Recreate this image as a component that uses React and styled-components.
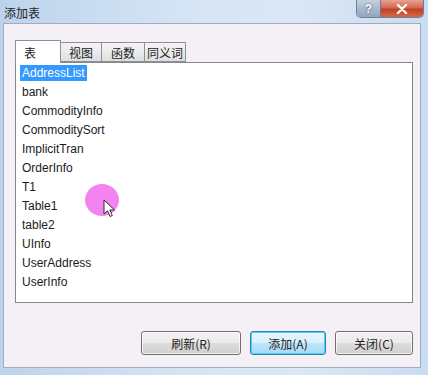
import React from 'react'
import styled, { createGlobalStyle } from 'styled-components'

const tables = [
  'AddressList',
  'bank',
  'CommodityInfo',
  'CommoditySort',
  'ImplicitTran',
  'OrderInfo',
  'T1',
  'Table1',
  'table2',
  'UInfo',
  'UserAddress',
  'UserInfo',
]

const tabs = [
  { label: '表', width: 46 },
  { label: '视图', width: 42 },
  { label: '函数', width: 44 },
  { label: '同义词', width: 42 },
]

const App = () => {
  return (
    <Window>
      <GlobalStyle />
      <TitleBar>
        <Title>添加表</Title>
        <Caption>
          <HelpBtn>?</HelpBtn>
          <CloseBtn>
            <svg width="12" height="10" viewBox="0 0 12 10">
              <path d="M2 1 L10 9 M10 1 L2 9" stroke="#fff" strokeWidth="2.4" strokeLinecap="round" />
            </svg>
          </CloseBtn>
        </Caption>
      </TitleBar>

      <Client>
        <TabRow>
          {tabs.map((t, i) => (
            <Tab key={t.label} $w={t.width} $active={i === 0}>{t.label}</Tab>
          ))}
        </TabRow>
        <ListBox>
          {tables.map((name, i) => (
            <Item key={name}>
              <Label $selected={i === 0}>{name}</Label>
            </Item>
          ))}
        </ListBox>
        <ButtonRow>
          <Button $w={100}>刷新(R)</Button>
          <Button $w={76} $default>添加(A)</Button>
          <Button $w={78}>关闭(C)</Button>
        </ButtonRow>
      </Client>

      <ClickDot />
      <Pointer width="14" height="20" viewBox="0 0 14 20">
        <path
          d="M1 1 L1 15 L4.5 11.8 L7 17.5 L9.3 16.5 L6.8 11 L11.5 11 Z"
          fill="#fff"
          stroke="#2a2a2a"
          strokeWidth="1"
          strokeLinejoin="round"
        />
      </Pointer>
    </Window>
  )
}

export default App

const GlobalStyle = createGlobalStyle`
  html, body {
    margin: 0;
    padding: 0;
    background: #cfdff1;
  }
  * { box-sizing: border-box; }
`

const Window = styled.div`
  position: relative;
  width: 428px;
  height: 375px;
  overflow: hidden;
  display: flex;
  flex-direction: column;
  padding: 0 7px 7px 3px;
  background: linear-gradient(to right, #bdd3ec 0%, #d6e5f5 45%, #dbe7f5 70%, #c9dcf1 100%);
  font-family: "Liberation Sans", "Noto Sans CJK SC", sans-serif;
  font-size: 12px;
  color: #1b1b1b;
`

const TitleBar = styled.div`
  height: 23px;
  display: flex;
  align-items: flex-start;
  justify-content: space-between;
`

const Title = styled.div`
  padding: 4px 0 0 1px;
  font-family: "Noto Sans CJK SC", sans-serif;
  font-size: 12px;
  color: #1e1e1e;
`

const Caption = styled.div`
  display: flex;
  margin-right: -3px;
  border: 1px solid #6d7f98;
  border-top: none;
  border-radius: 0 0 5px 5px;
  overflow: hidden;
  height: 18px;
`

const HelpBtn = styled.div`
  width: 24px;
  display: flex;
  align-items: center;
  justify-content: center;
  background: linear-gradient(#c5d0de, #a9b8cb 50%, #94a7bf);
  border-right: 1px solid #6d7f98;
  color: #fff;
  font-weight: bold;
  font-size: 12px;
  text-shadow: 0 0 2px #33475f;
`

const CloseBtn = styled.div`
  width: 42px;
  display: flex;
  align-items: center;
  justify-content: center;
  background: linear-gradient(#e8a393, #d5694f 45%, #c2411f 55%, #d5694a);
`

const Client = styled.div`
  flex: 1;
  display: flex;
  flex-direction: column;
  padding: 16px 7px 0 11px;
  background: #f4f0f6;
  border: 1px solid #9eadc2;
`

const TabRow = styled.div`
  display: flex;
  align-items: flex-end;
  height: 22px;
  position: relative;
  z-index: 1;
`

const Tab = styled.div`
  display: flex;
  align-items: center;
  justify-content: ${p => (p.$active ? 'flex-start' : 'center')};
  width: ${p => p.$w}px;
  padding-left: ${p => (p.$active ? '8px' : '0')};
  height: ${p => (p.$active ? '23px' : '20px')};
  margin-bottom: ${p => (p.$active ? '-1px' : '0')};
  margin-left: ${p => (p.$active ? '0' : '-1px')};
  border: 1px solid #8d9196;
  border-bottom: ${p => (p.$active ? 'none' : '1px solid #8d9196')};
  background: ${p => (p.$active ? '#fff' : 'linear-gradient(#f3f3f3, #ebebeb 50%, #dedede)')};
  font-family: "Noto Sans CJK SC", sans-serif;
  font-size: 12px;
`

const ListBox = styled.div`
  height: 241px;
  background: #fff;
  border: 1px solid #828790;
  padding: 2px 0 0 4px;
`

const Item = styled.div`
  height: 19px;
  display: flex;
  align-items: flex-start;
`

const Label = styled.span`
  display: inline-block;
  height: 16px;
  line-height: 16px;
  padding: 0 2px;
  background: ${p => (p.$selected ? '#3399ff' : 'transparent')};
  color: ${p => (p.$selected ? '#fff' : '#1b1b1b')};
`

const ButtonRow = styled.div`
  display: flex;
  justify-content: flex-end;
  gap: 9px;
  margin-top: 28px;
`

const Button = styled.div`
  width: ${p => p.$w}px;
  height: 24px;
  display: flex;
  align-items: center;
  justify-content: center;
  border: 1px solid ${p => (p.$default ? '#3c7fb1' : '#707070')};
  border-radius: 3px;
  background: ${p =>
    p.$default
      ? 'linear-gradient(#eaf6fd, #d9f0fc 50%, #bee6fd 51%, #a7d9f5)'
      : 'linear-gradient(#f2f2f2, #ebebeb 50%, #dddddd 51%, #cfcfcf)'};
  box-shadow: inset 0 0 0 1px ${p => (p.$default ? '#48d0f7' : 'rgba(255,255,255,0.7)')};
  font-family: "Noto Sans CJK SC", sans-serif;
  font-size: 12px;
  color: #1e1e1e;
`

const ClickDot = styled.div`
  position: absolute;
  left: 85px;
  top: 184px;
  width: 34px;
  height: 32px;
  border-radius: 50%;
  background: #f383ee;
`

const Pointer = styled.svg`
  position: absolute;
  left: 103px;
  top: 199px;
`
